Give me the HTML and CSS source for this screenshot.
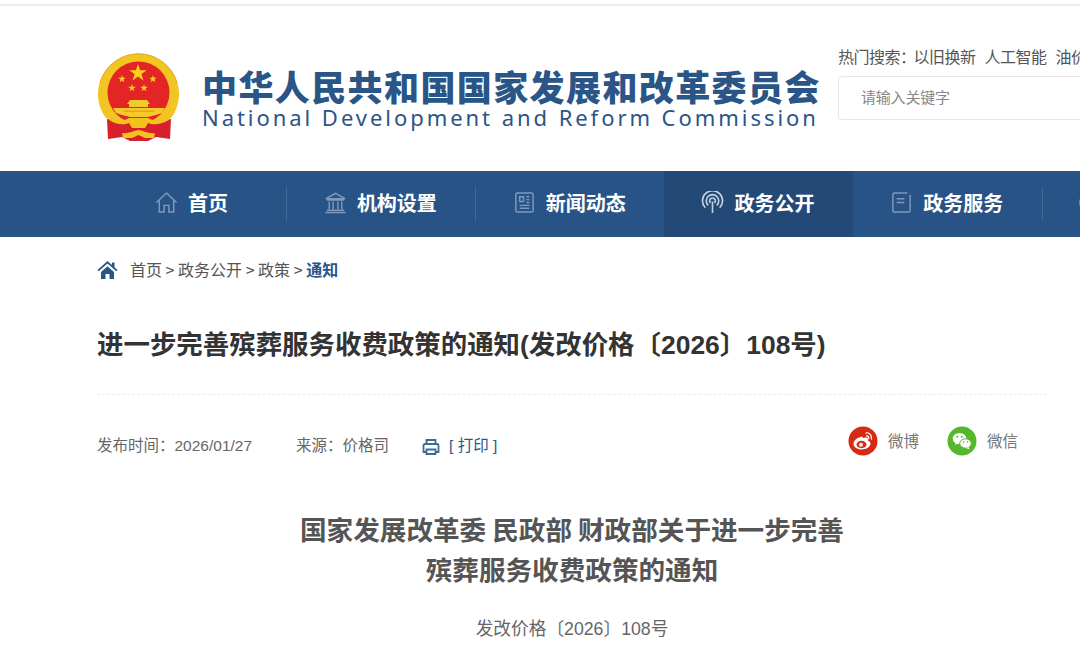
FILE: index.html
```html
<!DOCTYPE html>
<html lang="zh-CN">
<head>
    <meta charset="UTF-8">
    <title>进一步完善殡葬服务收费政策的通知</title>
    <link rel="stylesheet" href="styles.css">
</head>
<body>
    <div class="topline"></div>

    <header class="header">
        <svg class="emblem" viewBox="0 0 82 88">
            <path d="M40.500 .5a40.500 40.500 0 0 1 33 64L62 70H19L7.500 64.500A40.500 40.500 0 0 1 40.500 .5z" fill="#f3c522"/>
            <path d="M2 30 A40 40 0 0 1 79 30" fill="none" stroke="#e5ab18" stroke-width="1"/>
            <circle cx="40.500" cy="39.500" r="31" fill="#e32526"/>
            <!-- 红绶带 -->
            <path d="M9 66 L24 68 L57 68 L73 66 L72 86 L58 84 L50 88 H32 L24 84 L10 86Z" fill="#d7202a"/>
            <!-- 星 -->
            <polygon fill="#f7d21f" points="40,11 42.100,17.200 48.800,17.200 43.400,21.100 45.400,27.500 40,23.600 34.600,27.500 36.600,21.100 31.200,17.200 37.900,17.200"/>
            <polygon fill="#f7d21f" points="24,22 24.900,24.700 27.800,24.700 25.500,26.400 26.300,29.200 24,27.500 21.700,29.200 22.500,26.400 20.200,24.700 23.100,24.700"/>
            <polygon fill="#f7d21f" points="55,22 55.900,24.700 58.800,24.700 56.500,26.400 57.300,29.200 55,27.500 52.700,29.200 53.500,26.400 51.200,24.700 54.100,24.700"/>
            <polygon fill="#f7d21f" points="34,31 34.900,33.700 37.800,33.700 35.500,35.400 36.300,38.200 34,36.500 31.700,38.200 32.500,35.400 30.200,33.700 33.100,33.700"/>
            <polygon fill="#f7d21f" points="46,31 46.900,33.700 49.800,33.700 47.500,35.400 48.300,38.200 46,36.500 43.700,38.200 44.500,35.400 42.200,33.700 45.100,33.700"/>
            <!-- 天安门 -->
            <path d="M32 47 H49 L52 51 H50 V54 H31 V51 H29Z" fill="#f4c92a"/>
            <path d="M15 55 H67 L64 60 L58 62 L50 64 H32 L24 62 L18 60Z" fill="#f4c92a"/>
            <path d="M26 57.500 H56 V59 H26Z" fill="#e8a71a"/>
            <!-- 金带 -->
            <path d="M10 63 C20 68 27 68 31 65 H50 C54 68 62 68 72 63 L71 67 C62 72 55 72 50 70 L47 75 H34 L31 70 C26 72 19 72 11 67Z" fill="#f2c21e"/>
            <path d="M24 80 C30 81 35 78 40.500 77 C46 78 51 81 57 80 L56 85 H47 L40.500 82 L34 85 H25Z" fill="#f2c21e"/>
        </svg>
        <div class="brand">
            <div class="brand-cn">中华人民共和国国家发展和改革委员会</div>
            <div class="brand-en">National Development and Reform Commission</div>
        </div>
        <div class="search">
            <div class="hot">热门搜索：<span>以旧换新</span><span>人工智能</span><span>油价</span></div>
            <div class="search-box">请输入关键字</div>
        </div>
    </header>

    <nav class="nav">
        <a class="nav-item">
            <svg class="nav-icon" viewBox="0 0 24 24"><path d="M1.500 12 12 2l10.500 10M4.500 10v12h5v-7h5v7h5V10"/></svg>
            首页
        </a>
        <a class="nav-item">
            <svg class="nav-icon" viewBox="0 0 24 24"><path d="M2 8 12 2.500 22 8zM3 9.500h18M5.500 11v8M9.500 11v8M14.500 11v8M18.500 11v8M3 20h18M1.500 22.500h21"/></svg>
            机构设置
        </a>
        <a class="nav-item">
            <svg class="nav-icon" viewBox="0 0 24 24"><path d="M4.500 2h15a1.500 1.500 0 0 1 1.500 1.500v17a1.500 1.500 0 0 1-1.500 1.500h-15A1.500 1.500 0 0 1 3 20.500v-17A1.500 1.500 0 0 1 4.500 2zM7 6h4v5H7zM14 6h3M14 9h3M14 12h3M7 15h10M7 18h10"/></svg>
            新闻动态
        </a>
        <a class="nav-item active">
            <svg class="nav-icon wifi" viewBox="0 0 24 24"><path d="M4.500 17.500a10.500 10.500 0 1 1 15 0M7.500 15a6.500 6.500 0 1 1 9 0M10 12.500a3 3 0 1 1 4 0M12 11v12"/></svg>
            政务公开
        </a>
        <a class="nav-item">
            <svg class="nav-icon" viewBox="0 0 24 24"><path d="M18 2H5a2 2 0 0 0-2 2v16a2 2 0 0 0 2 2h14a2 2 0 0 0 2-2V4M7 8h8M7 12h8"/></svg>
            政务服务
        </a>
        <a class="nav-item last">
            <svg class="nav-icon" viewBox="0 0 24 24"><circle cx="12" cy="12" r="10"/></svg>
        </a>
    </nav>

    <main class="main">
        <div class="crumbs">
            <svg class="crumb-home" viewBox="0 0 20 18"><path d="M10 0 0 9l1.200 1.300L10 2.600l8.800 7.700L20 9l-3-2.700V1.500h-2.500v2.600zM3.500 11 10 5.200l6.500 5.800v7h-4.500v-5H8v5H3.500z"/></svg>
            <span>首页 &gt; 政务公开 &gt; 政策 &gt; <b>通知</b></span>
        </div>

        <h1 class="title">进一步完善殡葬服务收费政策的通知(发改价格〔2026〕108号)</h1>

        <div class="meta">
            <span class="meta-date">发布时间：2026/01/27</span>
            <span class="meta-source">来源：价格司</span>
            <svg class="print-icon" viewBox="0 0 18 16"><path d="M4.500 5V1h9v4M4 13H1.500V6.500a1.500 1.500 0 0 1 1.500-1.500h12a1.500 1.500 0 0 1 1.500 1.500V13H14M4.500 10.500h9V15h-9z"/></svg>
            <span class="meta-print">[ 打印 ]</span>
            <div class="share">
                <svg class="share-icon" viewBox="0 0 30 30">
                    <circle cx="15" cy="15" r="14.500" fill="#d52a14"/>
                    <path d="M12.500 11c-4 1-7 4-7 7 0 3 4 5.500 8 5.500 5 0 9-3 9-6 0-2-2-2.500-2.500-3 .5-1.500 0-3-2-3-1 0-2.500.5-3 .8 .5-1.800-.5-2-2.500-1.300z" fill="#fff"/>
                    <ellipse cx="13.500" cy="18.500" rx="5" ry="3.700" fill="#d52a14"/>
                    <circle cx="13" cy="18.700" r="2" fill="#fff"/>
                    <path d="M18 7c3-1 6 2 5.500 6M18.500 10c1.500-.5 2.500 1 2.300 2.500" fill="none" stroke="#fff" stroke-width="1.300" stroke-linecap="round"/>
                </svg>
                <span>微博</span>
                <svg class="share-icon" viewBox="0 0 30 30">
                    <circle cx="15" cy="15" r="14.500" fill="#55b82c"/>
                    <ellipse cx="12.500" cy="12.500" rx="6.800" ry="5.500" fill="#fff"/>
                    <path d="M9 16l-1 3 3.500-2z" fill="#fff"/>
                    <ellipse cx="18.500" cy="17.500" rx="5.800" ry="4.700" fill="#fff" stroke="#55b82c" stroke-width="1"/>
                    <path d="M21.500 21l1 2.500-3.500-1.500z" fill="#fff"/>
                    <circle cx="10.300" cy="10.800" r="1" fill="#55b82c"/>
                    <circle cx="14.800" cy="10.800" r="1" fill="#55b82c"/>
                    <circle cx="16.500" cy="16" r=".8" fill="#55b82c"/>
                    <circle cx="20.500" cy="16" r=".8" fill="#55b82c"/>
                </svg>
                <span>微信</span>
            </div>
        </div>

        <h2 class="doc-title">国家发展改革委 民政部 财政部关于进一步完善<br>殡葬服务收费政策的通知</h2>
        <p class="doc-no">发改价格〔2026〕108号</p>
    </main>
</body>
</html>
```

FILE: styles.css
```css
html, body {
    margin: 0;
    padding: 0;
    height: 651px;
    overflow: hidden;
    background: #fff;
}
body {
    width: 1080px;
    font-family: "Liberation Sans", "Noto Sans CJK SC", sans-serif;
    color: #666;
}
svg {
    flex: none;
    display: block;
}

.topline {
    height: 2px;
    margin-top: 4px;
    background: #e8edf3;
}

/* 头部 */
.header {
    display: flex;
    height: 165px;
    padding-left: 98px;
    overflow: hidden;
}
.emblem {
    width: 82px;
    height: 88px;
    margin-top: 47px;
}
.brand {
    flex: none;
    margin-left: 22px;
    margin-top: 59px;
    width: 636px;
    color: #2a5587;
}
.brand-cn {
    font-family: "Noto Sans CJK SC", sans-serif;
    font-size: 35px;
    font-weight: 900;
    line-height: 42px;
    letter-spacing: 1.400px;
    white-space: nowrap;
}
.brand-en {
    font-family: "Noto Sans", sans-serif;
    font-size: 22px;
    line-height: 20px;
    letter-spacing: 2.950px;
    white-space: nowrap;
}
.search {
    flex: none;
    margin-top: 38px;
}
.hot {
    font-family: "Noto Sans CJK SC", sans-serif;
    font-size: 16px;
    line-height: 24px;
    letter-spacing: -0.500px;
    color: #555;
    white-space: nowrap;
}
.hot span {
    margin-right: 9px;
}
.hot span:first-child {
    margin-left: -2px;
}
.search-box {
    width: 400px;
    height: 44px;
    margin-top: 8px;
    padding-left: 22px;
    padding-bottom: 2px;
    border: 1px solid #e6e6e6;
    border-radius: 4px;
    font-family: "Noto Sans CJK SC", sans-serif;
    font-size: 15px;
    line-height: 40px;
    letter-spacing: -0.200px;
    color: #888;
    box-sizing: border-box;
}

/* 导航 */
.nav {
    display: flex;
    height: 66px;
    padding-left: 97.700px;
    background: #285387;
    overflow: hidden;
}
.nav-item {
    position: relative;
    display: flex;
    align-items: center;
    justify-content: center;
    flex: none;
    box-sizing: border-box;
    width: 188.800px;
    padding-bottom: 3px;
    gap: 10px;
    font-family: "Noto Sans CJK SC", sans-serif;
    font-size: 20px;
    font-weight: 700;
    color: #fff;
}
.nav-item::after {
    content: "";
    position: absolute;
    right: -1px;
    top: 16px;
    height: 34px;
    width: 1px;
    background: #46699a;
}
.nav-item.active {
    background: #234a77;
}
.nav-item.active::after {
    display: none;
}
.nav-item.last {
    justify-content: flex-start;
    padding-left: 37px;
}
.nav-icon {
    width: 23px;
    height: 23px;
    margin-left: -1px;
    fill: none;
    stroke: #7f9abb;
    stroke-width: 1.500;
}
.nav-icon.wifi {
    stroke: #c4d0df;
    stroke-width: 1.700;
}

/* 内容 */
.main {
    width: 950px;
    margin-left: 97px;
}
.crumbs {
    display: flex;
    align-items: center;
    gap: 12px;
    height: 63px;
    padding-bottom: 3px;
    font-family: "Noto Sans CJK SC", "Liberation Sans", sans-serif;
    font-size: 16px;
    color: #555;
}
.crumbs b {
    color: #2a5587;
    font-weight: 700;
}
.crumb-home {
    width: 21px;
    height: 18px;
    margin-top: 3px;
    fill: #2a5587;
}
.title {
    margin: 0;
    padding: 21px 0 28px;
    border-bottom: 1px dashed #ebebeb;
    font-size: 26.450px;
    font-weight: 700;
    line-height: 42px;
    color: #333;
    white-space: nowrap;
}
.meta {
    display: flex;
    align-items: center;
    height: 98px;
    padding-bottom: 2px;
    font-size: 15.500px;
    color: #666;
}
.meta-source {
    margin-left: 44px;
}
.print-icon {
    width: 18px;
    height: 16px;
    margin-left: 33px;
    margin-top: 5px;
    fill: none;
    stroke: #3d6a96;
    stroke-width: 1.800;
}
.meta-print {
    margin-left: 9px;
    color: #2a5587;
}
.share {
    display: flex;
    align-items: center;
    gap: 10px;
    margin-left: auto;
    margin-right: 29px;
    margin-top: -8px;
}
.share span {
    color: #777;
    margin-right: 18px;
}
.share span:last-child {
    margin-right: 0;
}
.share-icon {
    width: 30px;
    height: 30px;
    margin-top: 2px;
}
.doc-title {
    margin: 14px 0 0;
    text-align: center;
    font-family: "Noto Sans CJK SC", sans-serif;
    font-size: 26.600px;
    font-weight: 700;
    line-height: 40px;
    color: #555;
}
.doc-no {
    margin: 25px 0 0;
    text-align: center;
    font-size: 17.700px;
    line-height: 30px;
    color: #666;
}
```
